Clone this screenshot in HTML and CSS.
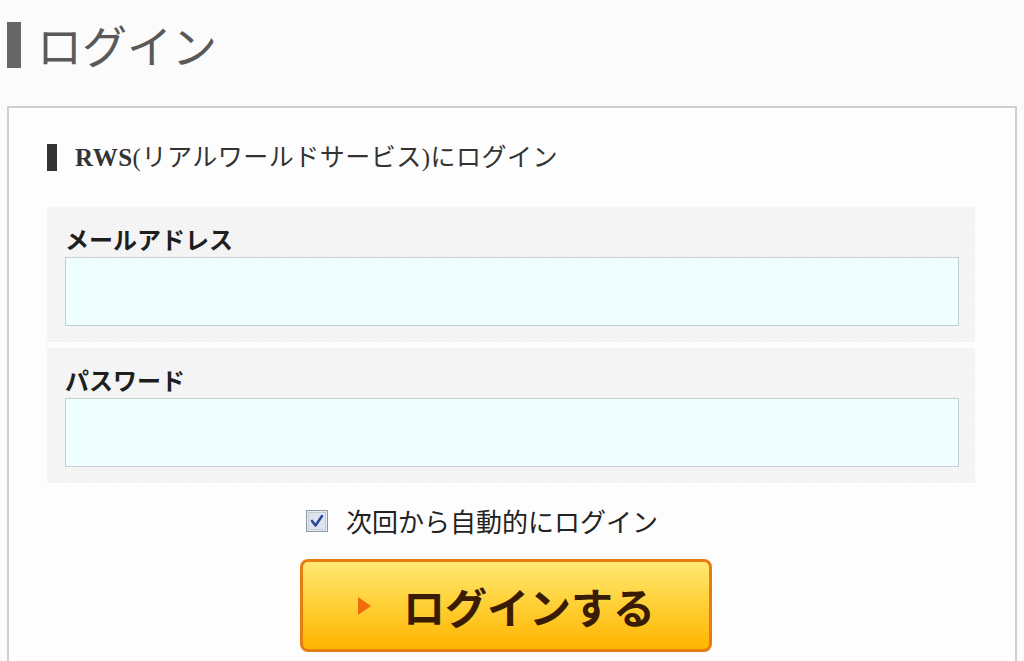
FILE: index.html
```html
<!DOCTYPE html>
<html lang="ja">
<head>
  <meta charset="UTF-8">
  <meta name="viewport" content="width=device-width, initial-scale=1.0">
  <title>ログイン</title>
  <link rel="stylesheet" href="styles.css">
</head>
<body>
  <h1 class="page-title">ログイン</h1>

  <div class="login-box">
    <h2 class="box-title"><span class="latin">RWS</span>(リアルワールドサービス)にログイン</h2>

    <form class="login-form" onsubmit="return false;">
      <div class="field">
        <label class="field-label" for="email">メールアドレス</label>
        <input class="field-input" type="text" id="email" name="email">
      </div>

      <div class="field">
        <label class="field-label" for="password">パスワード</label>
        <input class="field-input" type="password" id="password" name="password">
      </div>

      <label class="remember">
        <span class="check">
          <svg width="22" height="22" viewBox="0 0 22 22">
            <rect x="0.5" y="0.5" width="21" height="21" fill="#e6eaf2" stroke="#8e99a6"/>
            <rect x="2.5" y="2.5" width="17" height="17" fill="#dfe5ef" stroke="#c4ccd8"/>
            <path d="M6 11 L9.5 15.5 L16 6" fill="none" stroke="#2c4a9c" stroke-width="2.6" stroke-linecap="round" stroke-linejoin="round"/>
          </svg>
        </span>
        <span class="remember-text">次回から自動的にログイン</span>
      </label>

      <button class="login-button" type="submit">
        <span class="arrow"></span>
        <span class="button-text">ログインする</span>
      </button>
    </form>
  </div>
</body>
</html>
```

FILE: styles.css
```css
body {
  margin: 0;
  padding: 0 7px 40px;
  background-color: #fbfbfb;
  font-family: "Noto Sans CJK JP", sans-serif;
  color: #222;
}

/* Page heading with the grey bar */
.page-title {
  margin: 22px 0 0;
  height: 46px;
  line-height: 46px;
  border-left: 14px solid #666;
  padding-left: 16px;
  font-size: 45px;
  font-weight: normal;
  color: #595959;
}

.login-box {
  margin-top: 38px;
  border: 2px solid #cfcfcf;
  background-color: #fdfdfd;
  padding: 36px 40px 60px 38px;
}

.box-title {
  margin: 0 0 36px;
  height: 27px;
  line-height: 27px;
  border-left: 10px solid #333;
  padding-left: 18px;
  font-family: "Liberation Serif", "Noto Sans CJK JP", serif;
  font-size: 25px;
  font-weight: normal;
  letter-spacing: 0.5px;
  color: #333;
}

.box-title .latin {
  font-weight: bold;
}

/* grey dotted panel behind each field */
.field {
  padding: 14px 16px 16px 18px;
  background-color: #f5f5f5;
  background-image: radial-gradient(rgba(0, 0, 0, 0.035) 0.8px, transparent 0.8px);
  background-size: 3px 3px;
}

.field + .field {
  margin-top: 6px;
}

.field-label {
  display: block;
  height: 36px;
  line-height: 36px;
  font-size: 24px;
  font-weight: bold;
  color: #1e1e1e;
}

.field-input {
  display: block;
  box-sizing: border-box;
  width: 100%;
  height: 69px;
  margin: 0;
  border: 1px solid #c3cfd1;
  background-color: #effefe;
  font-size: 22px;
  padding: 0 10px;
}

.remember {
  display: flex;
  align-items: center;
  height: 28px;
  margin-top: 24px;
  padding-left: 259px;
  cursor: pointer;
}

.check {
  display: block;
  width: 22px;
  height: 22px;
}

.check svg {
  display: block;
}

.remember-text {
  margin-left: 18px;
  font-size: 26px;
  line-height: 28px;
  color: #222;
}

.login-button {
  display: flex;
  align-items: center;
  box-sizing: border-box;
  width: 412px;
  height: 93px;
  margin: 24px 0 0 253px;
  padding: 0 0 0 55px;
  border: 3px solid #e67c14;
  border-radius: 8px;
  background: linear-gradient(#ffe872, #ffd23a 45%, #ffb400);
  cursor: pointer;
  font-family: "Noto Sans CJK JP", sans-serif;
}

.arrow {
  width: 0;
  height: 0;
  border-top: 9px solid transparent;
  border-bottom: 9px solid transparent;
  border-left: 13px solid #ef6c0c;
}

.button-text {
  margin-left: 32px;
  font-size: 42px;
  font-weight: bold;
  line-height: 50px;
  color: #3a1c06;
}
```
